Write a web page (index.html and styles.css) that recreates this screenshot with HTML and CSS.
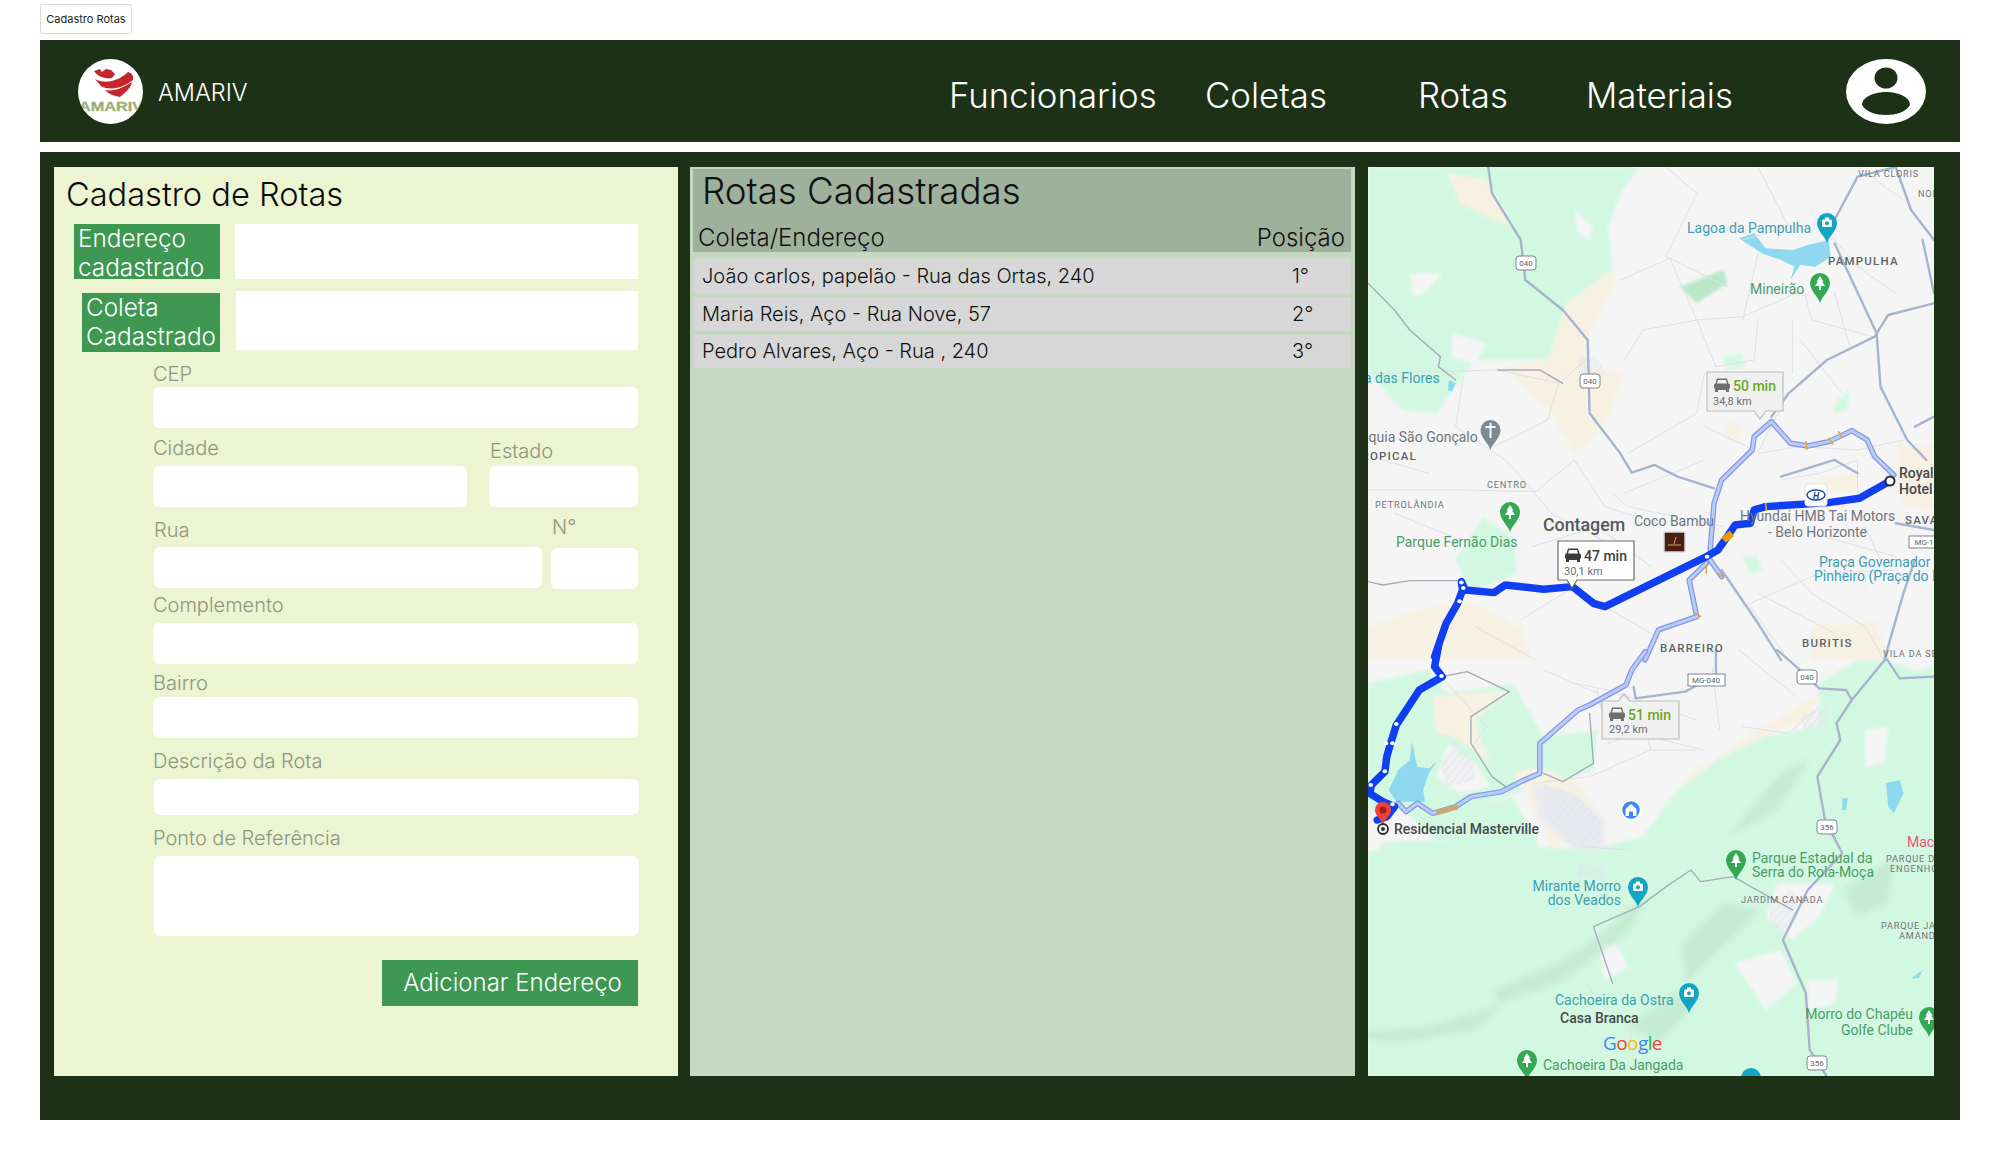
FILE: index.html
```html
<!DOCTYPE html>
<html lang="pt-BR">
<head>
<meta charset="utf-8">
<title>Cadastro Rotas</title>
<link rel="stylesheet" href="styles.css">
</head>
<body>
<div class="tab">Cadastro Rotas</div>
<header class="topbar">
  <div class="brand">
    <svg class="logo" viewBox="0 0 65 65" aria-label="Logo Amariv">
      <defs><clipPath id="logoclip"><circle cx="32.5" cy="32.5" r="32.5"/></clipPath></defs>
      <g clip-path="url(#logoclip)">
        <rect width="65" height="65" fill="#fff"/>
        <path fill="#c4262c" d="M16 12L22 10L24 13L28 10L33 11L37 15L34 19C27 20 20 18 16 12Z"/>
        <path fill="#c4262c" d="M17 20C28 26 42 21 50 13C54 14 56 17 55 21C48 27 34 33 23 27Z"/>
        <path fill="#c4262c" d="M27 31C36 33 46 28 54 23C53 29 47 34 42 38C36 37 31 35 27 31Z"/>
        <text class="logo-text" x="1" y="52" textLength="64" lengthAdjust="spacingAndGlyphs">AMARIV</text>
      </g>
    </svg>
    <span class="brand-name">AMARIV</span>
  </div>
  <nav class="nav">
    <a class="nav-link nav-func">Funcionarios</a>
    <a class="nav-link nav-col">Coletas</a>
    <a class="nav-link nav-rot">Rotas</a>
    <a class="nav-link nav-mat">Materiais</a>
  </nav>
  <svg class="avatar" viewBox="0 0 80 65" aria-label="Perfil">
    <ellipse cx="40" cy="32.5" rx="40" ry="32.5" fill="#fff"/>
    <ellipse cx="40" cy="19" rx="11.5" ry="10.5" fill="#1d3117"/>
    <path fill="#1d3117" d="M16 46C16 38 28 33 40 33C52 33 64 38 64 46C60 53 50 56 40 56C30 56 20 53 16 46Z"/>
  </svg>
</header>

<main class="board">
  <section class="panel-form">
    <h1 class="form-title">Cadastro de Rotas</h1>
    <div class="picker picker-a">
      <label class="tag tag-a">Endereço cadastrado</label>
      <input class="box box-a" type="text">
    </div>
    <div class="picker picker-b">
      <label class="tag tag-b">Coleta Cadastrado</label>
      <input class="box box-b" type="text">
    </div>
    <div class="fields">
      <div class="field f-cep">
        <label class="lbl">CEP</label>
        <input class="inp" type="text">
      </div>
      <div class="split f-city">
        <div class="field grow"><label class="lbl l-city">Cidade</label><input class="inp" type="text"></div>
        <div class="field w-state"><label class="lbl l-state">Estado</label><input class="inp" type="text"></div>
      </div>
      <div class="split f-street">
        <div class="field grow"><label class="lbl l-street">Rua</label><input class="inp" type="text"></div>
        <div class="field w-num"><label class="lbl l-num">N°</label><input class="inp" type="text"></div>
      </div>
      <div class="field f-comp"><label class="lbl l-comp">Complemento</label><input class="inp" type="text"></div>
      <div class="field f-bairro"><label class="lbl">Bairro</label><input class="inp" type="text"></div>
      <div class="field f-desc"><label class="lbl l-comp">Descrição da Rota</label><input class="inp inp-short" type="text"></div>
      <div class="field f-ponto"><label class="lbl l-comp">Ponto de Referência</label><textarea class="inp inp-tall"></textarea></div>
      <button class="add" type="button">Adicionar Endereço</button>
    </div>
  </section>

  <section class="panel-list">
    <div class="list-head">
      <h2 class="list-title">Rotas Cadastradas</h2>
      <div class="list-cols"><span>Coleta/Endereço</span><span>Posição</span></div>
    </div>
    <ul class="rows">
      <li class="row"><span>João carlos, papelão - Rua das Ortas, 240</span><span class="pos">1°</span></li>
      <li class="row"><span>Maria Reis, Aço - Rua Nove, 57</span><span class="pos">2°</span></li>
      <li class="row"><span>Pedro Alvares, Aço - Rua , 240</span><span class="pos">3°</span></li>
    </ul>
  </section>

  <section class="panel-map">
    <svg class="map" viewBox="0 0 566 909" aria-label="Mapa da rota">
      <defs>
        <path id="pin" d="M0 20C-2 13 -10 8 -10 0A10 10 0 0 1 10 0C10 8 2 13 0 20Z"/>
        <g id="cam"><rect x="-5" y="-3.5" width="10" height="7.5" rx="1.5" fill="#fff"/><rect x="-2" y="-5.5" width="4" height="3" fill="#fff"/><circle r="2" cy="0.3" class="cam-eye"/></g>
        <path id="tree" fill="#fff" d="M0 -7L3.5 -1.5H2L5 3H1V7H-1V3H-5L-2 -1.5H-3.5Z"/>
        <path id="car" d="M2 12V15H5V13H13V15H16V12L17 11V7.5L15.5 6.5L14 1.5H4L2.5 6.5L1 7.5V11ZM5 3H13L14 6.5H4Z"/>
        <pattern id="grid" width="16" height="10" patternUnits="userSpaceOnUse" patternTransform="rotate(35)">
          <path d="M0 0H16M0 5H16M8 0V10" fill="none" stroke="#e0e3e8" stroke-width="2"/>
        </pattern>
      </defs>

      <rect class="land" width="566" height="909"/>

      <g transform="translate(-8,-7) scale(0.3827,0.3333)">
        <g class="soft">
          <path class="green" d="M21 21H730L680 100L650 200L660 330L540 430L490 600L300 600L200 760L110 750L21 640Z"/>
          <path class="tan" d="M230 40L330 60L400 200L330 170L260 130Z"/>
          <path class="tan" d="M540 430L660 330L670 360L590 540L600 620L690 640L640 800L560 880L500 760L380 620L490 600Z"/>
          <path class="land" d="M130 340L215 340L170 400L140 410Z"/>
          <path class="land" d="M240 520L330 550L300 610L240 590Z"/>
          <path class="land" d="M560 150L610 200L600 240L570 215Z"/>
          <path class="green" d="M250 1200L320 1070L400 1130L410 1240L290 1300Z"/>
          <path class="green-dark" d="M835 380L950 330L960 370L880 430Z"/>
          <path class="green" d="M945 590L1000 580L1005 620L960 630Z"/>
          <path class="green" d="M1240 730L1280 690L1275 750L1235 760Z"/>
          <path class="green" d="M1000 1190L1040 1190L1050 1230L1020 1240Z"/>
          <path class="tan" d="M21 1400L150 1350L280 1320L420 1400L450 1500H21Z"/>
          <path class="tan" d="M960 780L1000 800L990 850L950 830Z"/>
          <path class="tan" d="M1200 950L1300 940L1300 1000L1210 990Z"/>
          <path class="tan" d="M1180 1400L1350 1380L1380 1500H1180Z"/>
          <path class="tan" d="M1400 850L1500 860V1050L1420 1040Z"/>
        </g>
        <path class="lake" d="M990 235L1030 220L1060 265L1130 270L1170 255L1225 240L1230 290L1190 320L1150 315L1125 360L1135 320L1100 300L1050 280Z"/>
        <path class="lake" d="M232 660L250 670L240 695L230 690Z"/>
        <path fill="url(#grid)" d="M570 590L620 590L640 640L610 670L570 640Z"/>

        <g class="minor">
          <path d="M680 360L810 295L880 480L1000 470L1160 390L1180 480L1340 530"/>
          <path d="M800 21L880 100L800 290L960 380"/>
          <path d="M1040 21L1120 200L1000 240"/>
          <path d="M690 600L740 510L880 480L930 620L1030 600L1040 480"/>
          <path d="M1120 700L1060 830L1040 880L1150 860L1300 870L1420 840"/>
          <path d="M20 990L260 990L460 995L560 900L640 1040L780 1090"/>
          <path d="M270 650L250 800L340 870L380 900L450 990L500 1060L700 1180"/>
          <path d="M1100 960L1200 940L1300 900L1300 1000"/>
          <path d="M40 640L360 630L520 670L600 590"/>
          <path d="M420 1380L560 1280M640 1340L850 1480M1000 1340L1200 1240L1400 1230"/>
          <path d="M1100 1200L1180 1300L1320 1400L1370 1500"/>
          <path d="M1040 280L1000 480M1240 400L1280 560M1130 480L1130 640"/>
          <path d="M520 670L490 780L350 860"/>
          <path d="M950 1100L700 1040L660 1000M1020 1340L1120 1500"/>
          <path d="M700 880L880 760L900 640M690 1000L900 900M900 800L1030 870"/>
          <path d="M1180 160L1300 320L1400 400M1300 21L1420 120M1150 540L1260 700"/>
          <path d="M450 1160L620 1100L760 1220M300 1400L460 1500M90 1060L240 1130M60 900L180 940"/>
          <path d="M1040 1300L1240 1420M1180 1120L1400 1190M1320 1100L1380 1250"/>
        </g>
        <g class="road">
          <path d="M335 21L345 100L420 240L432 360L530 450L595 540L600 760L680 880L710 938L770 915L830 950L925 985"/>
          <path d="M1240 180L1300 50L1400 21"/>
          <path d="M1240 250L1350 520L1360 680L1430 840L1480 900"/>
          <path d="M1500 430L1380 465L1345 530L1220 600L1120 700L1075 770"/>
          <path d="M1400 21L1440 150L1500 240M1470 240L1500 400"/>
          <path d="M945 1230L1040 1390L1100 1500"/>
          <path d="M1370 1500L1420 1300L1450 1200"/>
          <path d="M1400 1090L1500 1110M1450 800L1500 770"/>
          <path d="M1100 950L1240 900L1300 940"/>
        </g>
        <g class="road-thin">
          <path d="M21 370L90 450L130 510L210 590L205 620L250 660"/>
          <path d="M21 1265L60 1275L130 1262L260 1262"/>
          <path d="M360 630L470 630L530 670"/>
        </g>

        <g class="alt-edge">
          <path d="M1395 945L1345 890L1325 840L1285 812L1225 845L1170 858L1125 850L1075 785L1030 830L1025 870L945 960L925 1030L915 1170"/>
          <path d="M915 1200L945 1250M905 1210L860 1260L880 1370L780 1410L745 1500"/>
        </g>
        <g class="alt-fill">
          <path d="M1395 945L1345 890L1325 840L1285 812L1225 845L1170 858L1125 850L1075 785L1030 830L1025 870L945 960L925 1030L915 1170"/>
          <path d="M915 1200L945 1250M905 1210L860 1260L880 1370L780 1410L745 1500"/>
        </g>
        <path class="route" d="M1385 963L1305 1015L1225 1028L1060 1040L1030 1050L1020 1090L980 1095L960 1130L935 1170L905 1190L640 1340L610 1330L555 1280L480 1288L380 1275L350 1298L275 1290L265 1265L268 1290L255 1330L225 1390L210 1440L195 1490"/>
        <path class="traffic" d="M950 1140L972 1120"/>
        <path class="traffic-thin" d="M1060 1030L1062 1050M1165 845L1168 868M1225 835L1235 852M1250 815L1260 833M905 1215L905 1240M935 1240L948 1250M875 1360L890 1370"/>
        <circle class="dot" cx="907" cy="1190" r="6"/>
        <circle class="dot" cx="265" cy="1268" r="6"/>
        <circle class="dot" cx="270" cy="1284" r="6"/>
        <circle class="dot" cx="260" cy="1324" r="6"/>
      </g>

      <g transform="translate(-8,483) scale(0.3827,0.3333)">
        <g class="soft">
          <path class="green" d="M21 610L60 575L200 570L470 590L600 600L740 560L820 430L1000 270L1200 230L1300 100L1500 50V1280H21Z"/>
          <path class="green" d="M21 100L180 60L230 130L400 100L480 260L620 240L610 360L430 420L250 490L100 470L21 480Z"/>
          <path class="green" d="M100 470L260 480L400 440L470 590L200 570Z"/>
          <path class="green" d="M1200 100L1300 30L1370 30L1500 80V200L1200 250Z"/>
          <path class="tan" d="M190 140L270 130L390 125L300 210L340 340L250 260L200 250Z"/>
          <path class="tan" d="M820 430L1000 270L1200 130L1180 200L1000 290L860 370L810 460Z"/>
          <path class="tan" d="M400 370L470 350L570 400L630 500L500 600L440 440Z"/>
          <path class="land" d="M1320 240L1380 230L1370 340L1320 350Z"/>
          <path class="land" d="M980 940L1100 900L1140 1000L1060 1080Z"/>
          <path class="land" d="M1090 700L1240 700L1200 800L1130 870L1060 800Z"/>
          <path class="land" d="M620 880L670 880L700 950L640 990Z"/>
          <path class="land" d="M1170 990L1250 990L1240 1060L1170 1080Z"/>
          <path class="land" d="M21 480L60 540L50 600L21 600Z"/>
          <path class="land" d="M200 380L230 280L300 340L340 410L260 430Z"/>
          <path class="city" d="M450 400L560 430L640 510L640 600L560 600L470 510Z"/>
        </g>
        <g class="softer">
          <path class="ridge" d="M350 1020L530 930L620 860L760 720L700 850L520 1000L360 1060Z"/>
          <path class="ridge" d="M21 1140L180 1130L380 1060L300 1140L100 1180L21 1170Z"/>
          <path class="ridge" d="M840 880L950 760L1050 780L920 920L850 1000Z"/>
          <path class="ridge" d="M960 560L1100 370L1180 320L1090 480Z"/>
          <path class="ridge" d="M700 1130L820 1030L880 1060L780 1180Z"/>
          <path class="ridge" d="M1260 720L1400 620L1380 760L1300 800Z"/>
        </g>
        <path fill="url(#grid)" d="M480 400L560 430L630 510L630 590L560 590L480 500Z"/>
        <path fill="url(#grid)" d="M210 340L250 270L300 340L300 390L230 410Z"/>
        <path fill="url(#grid)" d="M1070 750L1130 720L1150 790L1110 860L1070 810Z"/>
        <path fill="url(#grid)" d="M1150 200L1220 170L1220 230L1160 240Z"/>
        <path fill="url(#grid)" d="M570 640L640 650L640 690L570 680Z"/>
        <path class="lake" d="M135 275L130 330L100 360L75 420L95 455L170 455L165 420L180 370L200 335L180 355L150 350L140 300Z"/>
        <path class="lake" d="M1375 400L1410 390L1420 430L1395 490L1380 470Z"/>
        <path class="lake" d="M1260 445L1275 445L1270 480L1260 480Z"/>
        <path class="lake" d="M1440 985L1470 960L1460 985Z"/>
        <g class="minor">
          <path d="M220 90L330 230L300 280M620 120L650 280L720 250L900 300"/>
          <path d="M720 130L760 300L880 300M920 50L940 240M990 0L1140 140"/>
          <path d="M560 100L650 120L880 210M480 60L620 130"/>
          <path d="M450 400L600 380L760 300M580 590L700 600"/>
          <path d="M1200 170L1120 250L1000 230"/>
          <path d="M590 1140L640 1080L590 1000M700 1130L730 1250"/>
        </g>
        <g class="road">
          <path d="M1090 0L1140 50L1200 115L1270 120L1285 150L1245 220L1255 270L1195 380L1215 510L1260 610L1170 720L1105 870L1165 1030L1175 1200L1220 1280"/>
          <path d="M1285 150L1375 25L1410 85L1500 80"/>
          <path d="M715 110L720 145L850 125L905 90"/>
          <path d="M930 0L930 70"/>
        </g>
        <g class="road-thin">
          <path d="M215 80L280 65L390 125L290 200L290 280L345 380L380 410"/>
          <path d="M600 190L610 340L530 395L480 370"/>
          <path d="M975 680L890 695L865 660L800 710L730 770L610 830L660 1000"/>
          <path d="M975 680L1130 780"/>
        </g>
        <path class="alt-edge" d="M745 5L710 60L695 105L600 165L570 180L470 280L470 370L420 395L370 425L290 440L250 470L190 490L150 460L120 485L100 460"/>
        <path class="alt-fill" d="M745 5L710 60L695 105L600 165L570 180L470 280L470 370L420 395L370 425L290 440L250 470L190 490L150 460L120 485L100 460"/>
        <path class="alt-brown" d="M200 488L255 470"/>
        <path class="route" d="M205 -10L195 50L215 80L155 120L95 225L80 280L70 320L65 365L30 405L25 430L60 455L90 470L70 500L45 510"/>
        <circle class="dot" cx="213" cy="78" r="6"/>
        <circle class="dot" cx="95" cy="222" r="6"/>
        <circle class="dot" cx="68" cy="280" r="6"/>
        <circle class="dot" cx="85" cy="280" r="6"/>
        <circle class="dot" cx="65" cy="364" r="6"/>
        <circle class="dot" cx="28" cy="405" r="6"/>
        <circle class="dot" cx="85" cy="463" r="6"/>
      </g>

      <!-- shields -->
      <g class="shield">
        <rect x="148" y="89" width="20" height="14" rx="3"/><rect x="212" y="207" width="20" height="14" rx="3"/>
        <rect x="429" y="503" width="20" height="14" rx="3"/><rect x="449" y="653" width="20" height="14" rx="3"/>
        <rect x="439" y="889" width="20" height="14" rx="3"/><rect x="320" y="507" width="37" height="12"/>
        <rect x="541" y="369" width="30" height="12"/>
      </g>
      <g class="shield-t">
        <text x="158" y="99">040</text><text x="222" y="217">040</text><text x="439" y="513">040</text>
        <text x="459" y="663">356</text><text x="449" y="899">356</text><text x="338" y="516">MG-040</text><text x="556" y="378">MG-1</text>
      </g>

      <!-- places -->
      <g class="t-teal">
        <text x="319" y="66">Lagoa da Pampulha</text>
        <text x="-4" y="216">a das Flores</text>
        <text x="451" y="400">Praça Governador</text>
        <text x="446" y="414">Pinheiro (Praça do I</text>
        <text x="253" y="724" text-anchor="end">Mirante Morro</text>
        <text x="253" y="738" text-anchor="end">dos Veados</text>
        <text x="187" y="838">Cachoeira da Ostra</text>
      </g>
      <g class="t-green">
        <text x="382" y="127">Mineirão</text>
        <text x="28" y="380">Parque Fernão Dias</text>
        <text x="384" y="696">Parque Estadual da</text>
        <text x="384" y="710">Serra do Rola-Moça</text>
        <text x="175" y="903">Cachoeira Da Jangada</text>
        <text x="545" y="852" text-anchor="end">Morro do Chapéu</text>
        <text x="545" y="868" text-anchor="end">Golfe Clube</text>
      </g>
      <g class="t-grey">
        <text x="-7" y="275">aquia São Gonçalo</text>
        <text x="266" y="359">Coco Bambu</text>
        <text x="372" y="354">Hyundai HMB Tai Motors</text>
        <text x="400" y="370">- Belo Horizonte</text>
      </g>
      <g class="t-area">
        <text x="460" y="98">PAMPULHA</text>
        <text x="49" y="293" text-anchor="end">TROPICAL</text>
        <text x="537" y="357">SAVA</text>
        <text x="292" y="485">BARREIRO</text>
        <text x="434" y="480">BURITIS</text>
      </g>
      <g class="t-small">
        <text x="490" y="10">VILA CLORIS</text>
        <text x="550" y="30">NOR</text>
        <text x="119" y="321">CENTRO</text>
        <text x="7" y="341">PETROLÂNDIA</text>
        <text x="515" y="490">VILA DA SE</text>
        <text x="518" y="695">PARQUE D</text>
        <text x="522" y="705">ENGENHO</text>
        <text x="373" y="736">JARDIM CANADA</text>
        <text x="513" y="762">PARQUE JA</text>
        <text x="531" y="772">AMAND</text>
      </g>
      <g class="t-bold">
        <text x="531" y="311">Royal</text>
        <text x="531" y="327">Hotel</text>
        <text x="26" y="667">Residencial Masterville</text>
        <text x="192" y="856">Casa Branca</text>
      </g>
      <text class="t-city" x="175" y="364">Contagem</text>
      <text class="t-pink" x="539" y="680">Mac</text>
      <text class="t-google" x="235" y="883"><tspan fill="#4285f4">G</tspan><tspan fill="#ea4335">o</tspan><tspan fill="#fbbc05">o</tspan><tspan fill="#4285f4">g</tspan><tspan fill="#34a853">l</tspan><tspan fill="#ea4335">e</tspan></text>

      <!-- pins -->
      <g class="teal"><use href="#pin" x="459" y="56"/><use href="#pin" x="270" y="720"/><use href="#pin" x="321" y="826"/><use href="#pin" x="383" y="911"/></g>
      <g class="greenpin"><use href="#pin" x="452" y="116"/><use href="#pin" x="142" y="345"/><use href="#pin" x="368" y="693"/><use href="#pin" x="159" y="893"/><use href="#pin" x="561" y="850"/></g>
      <use class="greypin" href="#pin" x="122.5" y="263"/>
      <use class="cam-t" href="#cam" x="459" y="56"/><use class="cam-t" href="#cam" x="270" y="720"/><use class="cam-t" href="#cam" x="321" y="826"/>
      <use href="#tree" x="142" y="345"/><use href="#tree" x="368" y="693"/><use href="#tree" x="159" y="893"/><use href="#tree" x="561" y="850"/><use href="#tree" x="452" y="116"/>
      <path class="cross" d="M122.5 256V271M117.5 260H127.5"/>

      <circle class="home" cx="263" cy="643" r="9.5"/>
      <path class="house" d="M263 637L257.5 642V649H261V644.5H265V649H268.5V642Z"/>

      <rect class="brown" x="296" y="365" width="21" height="20" rx="1"/>
      <path class="brown-line" d="M300 378H313M306 377L308 370"/>

      <rect class="hy-box" x="437" y="317" width="22" height="22" rx="3"/>
      <ellipse class="hy-ring" cx="448" cy="328" rx="9" ry="5"/>
      <text class="hy-h" x="448" y="332">H</text>

      <path class="red" d="M15 658C13 651 7 649 7 643A8 8 0 0 1 23 643C23 649 17 651 15 658Z"/>
      <circle class="red-dot" cx="15" cy="643" r="3.5"/>
      <circle class="ring" cx="15" cy="662" r="5"/>
      <circle class="ring-dot" cx="15" cy="662" r="2"/>
      <circle class="ring-start" cx="522" cy="314" r="4.5"/>

      <!-- callouts -->
      <g class="call-dim">
        <path d="M339 205H415V244H398L392 252L386 244H339Z"/>
      </g>
      <use class="car-dim" href="#car" x="345" y="210"/>
      <text class="c-time c-green" x="365" y="224">50 min</text><text class="c-km" x="345" y="238">34,8 km</text>

      <path class="call" d="M190 374H266V413H209L204 421L199 413H190Z"/>
      <use class="car-on" href="#car" x="196" y="380"/>
      <text class="c-time c-dark" x="216" y="394">47 min</text><text class="c-km" x="196" y="408">30,1 km</text>

      <path class="call-dim-p" d="M234 534H250L256 527L262 534H311V572H234Z"/>
      <use class="car-dim" href="#car" x="240" y="539"/>
      <text class="c-time c-green" x="260" y="553">51 min</text><text class="c-km" x="241" y="566">29,2 km</text>
    </svg>
  </section>
</main>
</body>
</html>
```

FILE: styles.css
```css
* { box-sizing: border-box; }
html, body { margin: 0; background: #fff; }
body { padding: 4px 40px 0; width: 2000px; height: 1160px; overflow: hidden; font-family: Inter, "Liberation Sans", sans-serif; font-weight: 300; }

.tab { width: 92px; height: 30px; border: 1px solid #d8d8d8; border-radius: 3px; font: 400 11px/28px Inter, sans-serif; text-align: center; color: #222; white-space: nowrap; }

.topbar { margin-top: 6px; height: 102px; background: #1d3117; display: flex; align-items: center; padding: 0 34px 0 38px; color: #fff; }
.brand { display: flex; align-items: center; gap: 15px; width: 871px; }
.logo { width: 65px; height: 65px; display: block; }
.logo-text { font: 700 13px "Liberation Sans", sans-serif; fill: #9bae78; stroke: #9bae78; stroke-width: .3; }
.brand-name { font-size: 23.5px; font-weight: 300; margin-top: 2px; }
.nav { display: flex; align-items: center; flex: 1; margin-top: 8px; }
.nav-link { font-size: 34.8px; font-weight: 300; color: #fff; white-space: nowrap; }
.nav-func { width: 256px; }
.nav-col { width: 213px; }
.nav-rot { width: 168px; }
.avatar { width: 80px; height: 65px; display: block; flex: none; }

.board { margin-top: 10px; height: 968px; background: #1d3117; padding: 15px 26px 44px 14px; display: grid; grid-template-columns: 624px 665px 566px; column-gap: 12px; }
.board > section { height: 909px; }
.board > .panel-map { margin-left: 1px; width: 566px; }

.panel-form { background: #ecf4d1; }
.form-title { margin: 0; padding: 7px 0 0 12px; height: 57px; font-size: 32.6px; font-weight: 300; line-height: 40px; color: #0b0b0b; }
.picker { display: flex; align-items: flex-start; }
.picker-a { padding-left: 20px; height: 67px; }
.picker-b { padding-left: 28px; height: 61px; }
.tag { background: #3e9852; color: #fff; font-size: 24.3px; line-height: 29px; font-weight: 300; display: block; flex: none; }
.tag-a { width: 146px; height: 55px; padding: 0 0 0 4px; }
.tag-b { width: 138px; height: 59px; margin-top: 2px; padding: 0 0 0 4px; }
.box { border: 0; background: #fff; display: block; padding: 0; }
.box-a { margin-left: 15px; width: 403px; height: 55px; }
.box-b { margin-left: 16px; width: 402px; height: 59px; }

.fields { padding-left: 99px; width: 584px; }
.lbl { display: block; font-size: 20px; line-height: 24px; color: #8e9682; font-weight: 300; }
.inp { display: block; width: 100%; border: 0; border-radius: 6px; background: #fff; height: 41px; padding: 0; resize: none; }
.f-cep { padding-top: 10px; }
.f-cep .lbl { margin-bottom: 1px; }
.split { display: flex; }
.grow { flex: 1; min-width: 0; }
.f-city { margin-top: 8px; align-items: flex-end; gap: 22px; }
.l-city { margin-bottom: 6px; }
.l-state { margin-bottom: 3px; padding-left: 1px; }
.w-state { width: 149px; }
.f-street { margin-top: 8px; gap: 9px; padding-left: 1px; }
.f-street .grow { padding-top: 3px; }
.l-street { margin-bottom: 5px; }
.l-num { margin-bottom: 9px; padding-left: 1px; }
.w-num { width: 87px; }
.f-comp { margin-top: 4px; }
.l-comp { margin-bottom: 6px; }
.f-bairro { margin-top: 7px; }
.f-bairro .lbl { margin-bottom: 2px; }
.f-desc { margin-top: 11px; width: 486px; }
.inp-short { height: 36px; margin-left: 1px; width: 485px; }
.f-ponto { margin-top: 11px; width: 486px; }
.inp-tall { height: 80px; margin-left: 1px; width: 485px; }
.add { display: block; margin: 24px 0 0 229px; width: 256px; height: 46px; border: 0; background: #3e9852; color: #fff; font: 300 24px Inter, sans-serif; padding: 0 0 2px 5px; }

.panel-list { background: #c6d7c2; padding: 2px 4px 0 3px; }
.list-head { background: #9fb19c; height: 83px; color: #111; padding: 0 6px 0 5px; }
.list-title { margin: 0; padding: 1px 0 0 4px; font-size: 36.7px; font-weight: 300; line-height: 42px; height: 54px; }
.list-cols { display: flex; justify-content: space-between; font-size: 24px; line-height: 29px; font-weight: 300; }
.rows { list-style: none; margin: 7px 0 0; padding: 0 0 0 1px; }
.row { height: 34px; margin-bottom: 4px; background: #d7d7d7; display: flex; align-items: center; padding-left: 8px; font-size: 20px; font-weight: 300; color: #111; }
.row span:first-child { flex: 1; }
.pos { width: 48px; margin-right: 11px; text-align: left; }
.row:last-child { height: 33px; padding-bottom: 2px; }

.panel-map { background: #f5f5f5; overflow: hidden; }
.map { display: block; width: 566px; height: 909px; font-family: Roboto, "Liberation Sans", sans-serif; font-weight: 400; }

.land { fill: #f5f5f5; }
.soft { filter: blur(4px); }
.softer { filter: blur(9px); opacity: .75; }
.green { fill: #d3f8e2; }
.green-dark { fill: #b9e8c8; }
.tan { fill: #f7f1e3; }
.city { fill: #eaecf0; }
.ridge { fill: #bfe8cd; }
.lake { fill: #8fd9f0; }
.minor path, .road path, .road-thin path, .alt-edge, .alt-edge path, .alt-fill, .alt-fill path, .alt-brown, .route, .traffic, .traffic-thin { fill: none; vector-effect: non-scaling-stroke; stroke-linejoin: round; stroke-linecap: round; }
.minor path { stroke: #dde1e8; stroke-width: 1; }
.road path { stroke: #a7b4cd; stroke-width: 2.4; }
.road-thin path { stroke: #a5adb9; stroke-width: 1.4; }
.alt-edge, .alt-edge path { stroke: #7f9be6; stroke-width: 5.5; }
.alt-fill, .alt-fill path { stroke: #bccbf6; stroke-width: 3; }
.alt-brown { stroke: #c9a874; stroke-width: 5.5; stroke-linecap: butt; }
.route { stroke: #0f3ff0; stroke-width: 7.5; }
.traffic { stroke: #f29900; stroke-width: 7; stroke-linecap: butt; }
.traffic-thin { stroke: #e8a33a; stroke-width: 1.6; }
.dot { fill: #fff; }
.shield rect { fill: #fff; stroke: #7d8590; stroke-width: 1; }
.shield-t text { font-size: 8px; fill: #5f6368; text-anchor: middle; }
.t-teal text { font-size: 14px; fill: #3d9fb0; }
.t-green text { font-size: 14px; fill: #4a9d68; }
.t-grey text { font-size: 14px; fill: #6f767c; }
.t-area text { font-size: 11.5px; fill: #5f6368; letter-spacing: 1.2px; font-weight: 500; }
.t-small text { font-size: 9.2px; fill: #70757a; letter-spacing: .8px; }
.t-bold text { font-size: 14px; fill: #45494e; font-weight: 500; }
.t-city { font-size: 17.8px; font-weight: 500; fill: #55595e; }
.t-pink { font-size: 14px; fill: #e8557a; }
.t-google { font-family: "Open Sans", sans-serif; font-size: 19px; font-weight: 400; letter-spacing: -.6px; }
.teal { fill: #12a5c4; }
.greenpin { fill: #34a853; }
.greypin { fill: #7b8a94; }
.cam-eye { fill: #12a5c4; }
.cross { fill: none; stroke: #fff; stroke-width: 2; }
.home { fill: #4285f4; stroke: #fff; stroke-width: 1.5; }
.house { fill: #fff; }
.brown { fill: #4a1e12; stroke: #d9d9d9; stroke-width: 1.5; }
.brown-line { fill: none; stroke: #d9a450; stroke-width: 1; }
.hy-box { fill: #fff; stroke: #e3e3e3; }
.hy-ring { fill: none; stroke: #1b4a9c; stroke-width: 1.5; }
.hy-h { font-size: 9px; font-style: italic; font-weight: 700; fill: #1b4a9c; text-anchor: middle; }
.red { fill: #ea4335; }
.red-dot { fill: #a61b12; }
.ring { fill: none; stroke: #2b2b2b; stroke-width: 1.8; }
.ring-dot { fill: #2b2b2b; }
.ring-start { fill: #fff; stroke: #2b2b2b; stroke-width: 2; }
.call-dim path, .call-dim-p { fill: #f0f0f0; stroke: #bdbdbd; stroke-width: 1.2; }
.call { fill: #fff; stroke: #6d6d6d; stroke-width: 1.2; }
.car-dim { fill: #6f6f6f; }
.car-on { fill: #3c3c3c; }
.c-time { font-size: 14px; font-weight: 500; }
.c-green { fill: #6aa81e; }
.c-dark { fill: #3c4043; }
.c-km { font-size: 11px; fill: #6f6f6f; }
```
